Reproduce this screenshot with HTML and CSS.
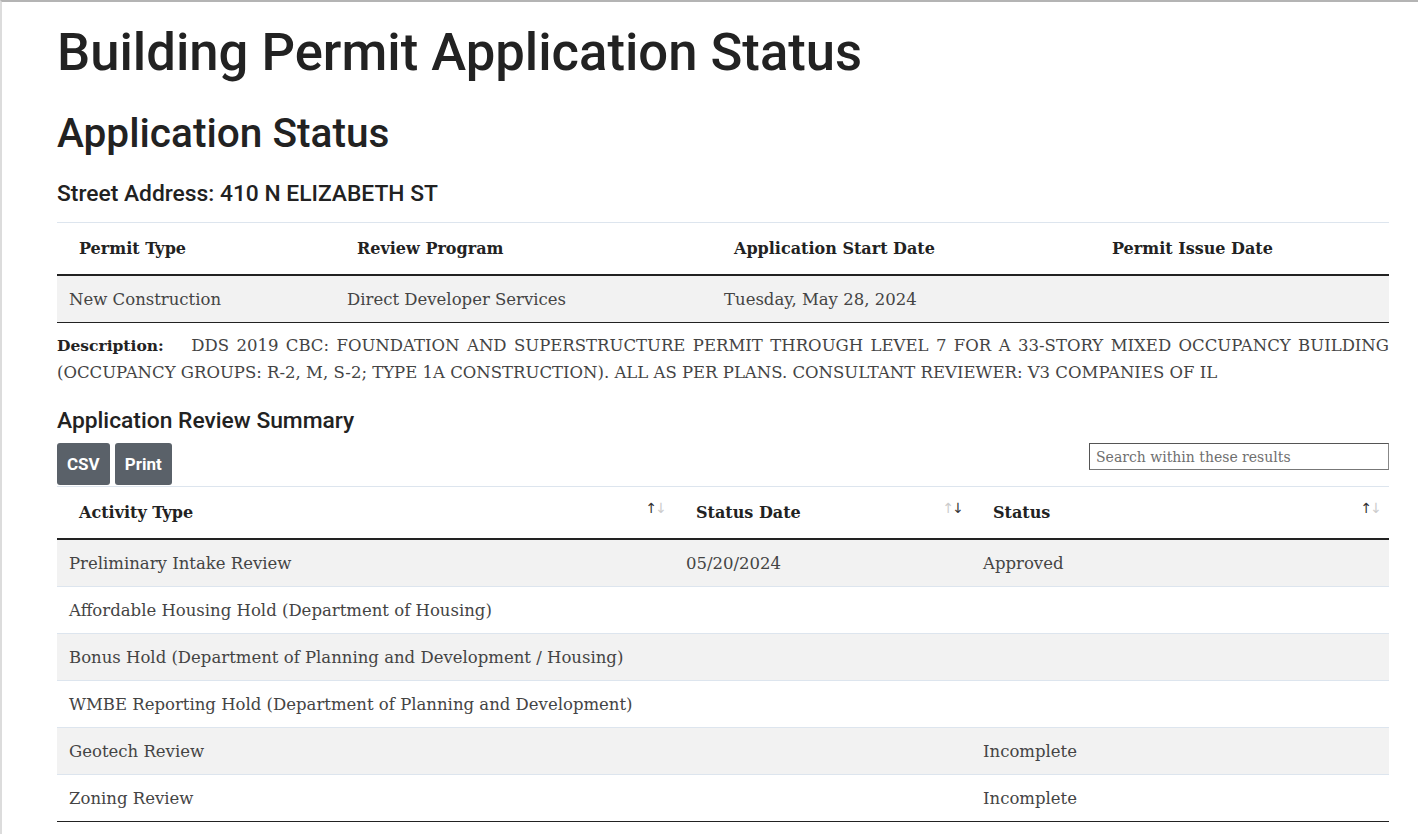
FILE: index.html
```html
<!DOCTYPE html>
<html lang="en">
<head>
<meta charset="utf-8">
<title>Building Permit Application Status</title>
<link rel="stylesheet" href="styles.css">
</head>
<body>
<main class="page">
  <h1 class="title">Building Permit Application Status</h1>
  <h2 class="subtitle">Application Status</h2>
  <h3 class="address">Street Address: 410 N ELIZABETH ST</h3>

  <table class="info">
    <thead>
      <tr>
        <th class="c1">Permit Type</th>
        <th class="c2">Review Program</th>
        <th class="c3">Application Start Date</th>
        <th class="c4">Permit Issue Date</th>
      </tr>
    </thead>
    <tbody>
      <tr>
        <td>New Construction</td>
        <td>Direct Developer Services</td>
        <td>Tuesday, May 28, 2024</td>
        <td></td>
      </tr>
    </tbody>
  </table>

  <p class="desc"><strong class="desc-label">Description:</strong> DDS 2019 CBC: FOUNDATION AND SUPERSTRUCTURE PERMIT THROUGH LEVEL 7 FOR A 33-STORY MIXED OCCUPANCY BUILDING (OCCUPANCY GROUPS: R-2, M, S-2; TYPE 1A CONSTRUCTION). ALL AS PER PLANS. CONSULTANT REVIEWER: V3 COMPANIES OF IL</p>

  <h4 class="section">Application Review Summary</h4>
  <div class="toolbar">
    <div class="buttons">
      <button class="btn">CSV</button>
      <button class="btn">Print</button>
    </div>
    <input class="search" type="text" placeholder="Search within these results">
  </div>

  <table class="review">
    <thead>
      <tr>
        <th class="r1">Activity Type<span class="sort"><span class="up dark">↑</span><span class="dn">↓</span></span></th>
        <th class="r2">Status Date<span class="sort"><span class="up">↑</span><span class="dn dark">↓</span></span></th>
        <th class="r3">Status<span class="sort"><span class="up dark">↑</span><span class="dn">↓</span></span></th>
      </tr>
    </thead>
    <tbody>
      <tr><td>Preliminary Intake Review</td><td>05/20/2024</td><td>Approved</td></tr>
      <tr><td>Affordable Housing Hold (Department of Housing)</td><td></td><td></td></tr>
      <tr><td>Bonus Hold (Department of Planning and Development / Housing)</td><td></td><td></td></tr>
      <tr><td>WMBE Reporting Hold (Department of Planning and Development)</td><td></td><td></td></tr>
      <tr><td>Geotech Review</td><td></td><td>Incomplete</td></tr>
      <tr><td>Zoning Review</td><td></td><td>Incomplete</td></tr>
    </tbody>
  </table>
</main>
</body>
</html>
```

FILE: styles.css
```css
html, body {
  margin: 0;
  padding: 0;
  background: #fff;
}
body {
  border-top: 2px solid #b4b4b4;
  border-left: 2px solid #dcdcdc;
  min-height: 834px;
  box-sizing: border-box;
  font-family: "DejaVu Serif", "Liberation Serif", serif;
  color: #444;
}
.page {
  padding: 0 29px 0 55px;
}
.title {
  font-family: Roboto, "Liberation Sans", sans-serif;
  font-weight: 500;
  font-size: 52.6px;
  line-height: 64px;
  color: #222;
  margin: 18px 0 0;
}
.subtitle {
  font-family: Roboto, "Liberation Sans", sans-serif;
  font-weight: 500;
  font-size: 40.6px;
  line-height: 48px;
  color: #222;
  margin: 25px 0 0;
}
.address {
  font-family: Roboto, "Liberation Sans", sans-serif;
  font-weight: 500;
  font-size: 22.8px;
  line-height: 26px;
  color: #222;
  margin: 24px 0 0;
}
table {
  width: 100%;
  border-collapse: collapse;
  table-layout: fixed;
}
.info {
  margin-top: 15px;
  border-top: 1px solid #dde5ee;
}
th {
  text-align: left;
  font-weight: 700;
  color: #222;
  font-size: 16px;
}
td {
  font-size: 16.5px;
  color: #444;
}
.info th {
  height: 51px;
  padding: 0 0 0 22px;
  border-bottom: 2px solid #222;
}
.info td {
  height: 46px;
  padding: 0 0 0 12px;
  background: #f2f2f2;
  border-bottom: 1px solid #222;
}
.c1 { width: 256px; }
.c2 { width: 355px; }
.c3 { width: 356px; }
.desc {
  margin: 9px 0 0;
  font-size: 16.5px;
  line-height: 27px;
  text-align: justify;
}
.desc-label {
  color: #222;
  font-size: 15.5px;
  margin-right: 20px;
}
.section {
  font-family: Roboto, "Liberation Sans", sans-serif;
  font-weight: 500;
  font-size: 22.8px;
  line-height: 28px;
  color: #222;
  margin: 21px 0 0;
}
.toolbar {
  display: flex;
  justify-content: space-between;
  align-items: flex-start;
  margin-top: 8px;
}
.buttons {
  display: flex;
  gap: 5px;
}
.btn {
  font-family: Roboto, "Liberation Sans", sans-serif;
  font-weight: 700;
  font-size: 17px;
  color: #fff;
  background: #5a6169;
  border: 0;
  border-radius: 3px;
  height: 42px;
  padding: 0 10px;
}
.search {
  width: 300px;
  height: 27px;
  box-sizing: border-box;
  border: 1px solid #555;
  border-right-color: #888;
  border-bottom-color: #777;
  padding: 0 6px;
  font-family: "DejaVu Serif", "Liberation Serif", serif;
  font-size: 14px;
  color: #444;
}
.search::placeholder {
  color: #6f6f6f;
}
.review {
  margin-top: 1px;
  border-top: 1px solid #dde5ee;
}
.review th {
  position: relative;
  height: 51px;
  padding: 0 0 0 22px;
  border-bottom: 2px solid #222;
}
.r1 { width: 595px; }
.r2 { width: 275px; }
.sort {
  position: absolute;
  right: 9px;
  top: 13px;
  font-family: "DejaVu Sans", sans-serif;
  font-weight: 400;
  font-size: 14px;
  letter-spacing: -2px;
  color: #ccc;
}
.sort .dark {
  color: #333;
}
.review td {
  height: 46px;
  padding: 0 0 0 12px;
  border-bottom: 1px solid #dde5ee;
}
.review tbody tr:nth-child(odd) td {
  background: #f2f2f2;
}
.review tbody tr:last-child td {
  border-bottom: 1px solid #222;
}
```
